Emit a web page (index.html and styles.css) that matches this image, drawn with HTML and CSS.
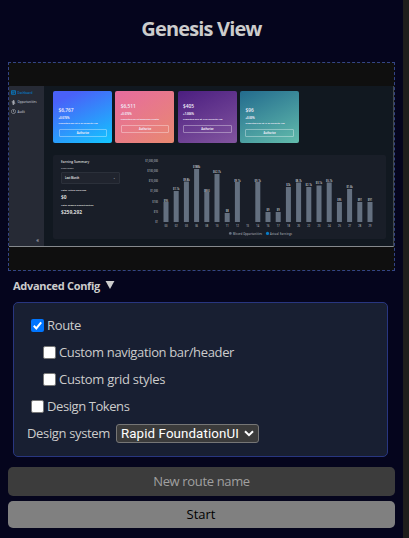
FILE: index.html
```
<!DOCTYPE html>
<html lang="en">
<head>
<meta charset="utf-8">
<title>Genesis View</title>
<link rel="stylesheet" href="styles.css">
</head>
<body>
<main class="view">
  <h1><span class="title">Genesis View</span></h1>
  <section class="drop">
    <div class="dash">
      <nav class="side">
        <div class="nav on"><svg viewBox="0 0 5 5"><path d="M.5.7h4v3.6h-4zM.5 2h4M2 2v2.3" fill="none" stroke="currentColor" stroke-width=".8"/></svg>Dashboard</div>
        <div class="nav"><svg viewBox="0 0 5 5"><path d="M4 1.2H2Q1 1.2 1 1.9T2 2.5H3Q4 2.5 4 3.1T3 3.9H1M2.5 0v5" fill="none" stroke="currentColor" stroke-width=".7"/></svg>Opportunities</div>
        <div class="nav"><svg viewBox="0 0 5 5"><path d="M2.5.4a2.1 2.1 0 1 0 .01 0M2.5 1v1.7l1 .7" fill="none" stroke="currentColor" stroke-width=".6"/></svg>Audit</div>
        <span class="fold">«</span>
      </nav>
      <div class="main">
        <div class="cards">
          <div class="card blue"><b>$6,767</b><i>+0.076%</i><p>Projected Rev at % of Security HM</p><span class="btn">Authorize</span></div>
          <div class="card pink up"><b>$6,511</b><i>+0.076%</i><p>Projected Rev at Business Crypto</p><span class="btn">Authorize</span></div>
          <div class="card violet up"><b>$405</b><i>+1.006%</i><p>Projected Rev at % of Security HM</p><span class="btn">Authorize</span></div>
          <div class="card teal"><b>$96</b><i>+0.00%</i><p>Projected Rev at % of Security HM</p><span class="btn">Authorize</span></div>
        </div>
        <div class="panel">
          <div class="summary">
            <strong class="head">Earning Summary</strong>
            <span class="lab">Time range</span>
            <div class="pick"><span>Last Month</span><span>⌄</span></div>
            <span class="cap">Total Actual Earnings</span>
            <b class="num">$0</b>
            <span class="cap second">Total Missed Opportunities</span>
            <b class="num">$259,292</b>
          </div>
          <svg class="chart" viewBox="140 155 247 84">
            <g class="axis" text-anchor="end">
              <text x="159" y="162">$1,000,000</text><text x="159" y="172">$100,000</text><text x="159" y="182.3">$10,000</text><text x="159" y="192.4">$1,000</text><text x="159" y="202.5">$100</text><text x="159" y="212.6">$10</text><text x="159" y="222.7">$1</text>
            </g>
            <path class="bars" d="M167 222V202M177.2 222V191M187.4 222V181.5M197.6 222V169M207.8 222V192M218 222V174M228.2 222V213M238.4 222V182M258.8 222V182M269 222V212M279.2 222V212M289.4 222V187M299.6 222V182.5M309.8 222V187M320 222V185.5M330.2 222V182.5M340.4 222V202M350.6 222V189M360.8 222V202M371 222V202"/>
            <g class="vals" text-anchor="middle">
              <text x="167" y="201.7">$95</text><text x="177.2" y="190.4">$1.1k</text><text x="187.4" y="180.5">$9.8k</text><text x="197.6" y="168.2">$188k</text><text x="207.8" y="191.6">$850</text><text x="218" y="173.2">$62.7k</text><text x="228.2" y="212">$8</text><text x="238.4" y="181.6">$9.1k</text><text x="258.8" y="181.6">$9.1k</text><text x="269" y="211">$9</text><text x="279.2" y="211">$9</text><text x="289.4" y="186.2">$2k</text><text x="299.6" y="182.3">$8.7k</text><text x="309.8" y="185.5">$2.1k</text><text x="320" y="184.2">$3.1k</text><text x="330.2" y="181.6">$5.7k</text><text x="340.4" y="201">$95</text><text x="350.6" y="188">$1.6k</text><text x="360.8" y="201.3">$91</text><text x="371" y="201.3">$91</text>
            </g>
            <g class="axis" text-anchor="middle">
              <text x="167" y="227.3">00</text><text x="177.2" y="227.3">02</text><text x="187.4" y="227.3">03</text><text x="197.6" y="227.3">06</text><text x="207.8" y="227.3">08</text><text x="218" y="227.3">10</text><text x="228.2" y="227.3">11</text><text x="238.4" y="227.3">12</text><text x="248.6" y="227.3">13</text><text x="258.8" y="227.3">14</text><text x="269" y="227.3">16</text><text x="279.2" y="227.3">17</text><text x="289.4" y="227.3">18</text><text x="299.6" y="227.3">20</text><text x="309.8" y="227.3">22</text><text x="320" y="227.3">23</text><text x="330.2" y="227.3">24</text><text x="340.4" y="227.3">25</text><text x="350.6" y="227.3">27</text><text x="360.8" y="227.3">28</text><text x="371" y="227.3">29</text>
            </g>
            <circle cx="231.3" cy="233.4" r="1.4" fill="#667080"/><circle cx="268.5" cy="233.4" r="1.6" fill="#087dc8"/>
            <g class="legend"><text x="234" y="234.6" textLength="29">Missed Opportunities</text><text x="271" y="234.6" textLength="22">Actual Earnings</text></g>
          </svg>
        </div>
      </div>
    </div>
  </section>
  <div class="adv"><span>Advanced Config</span><svg viewBox="0 0 10 9"><path d="M0 0h10L5 9z" fill="#ccc"/></svg></div>
  <section class="config">
    <label class="row"><span class="box checked"><svg viewBox="0 0 13 13"><path d="M2.8 6.8l2.5 2.6 4.9-6" fill="none" stroke="#fff" stroke-width="2"/></svg></span><span class="text">Route</span></label>
    <label class="row sub"><span class="box"></span><span class="text">Custom navigation bar/header</span></label>
    <label class="row sub"><span class="box"></span><span class="text grid-label">Custom grid styles</span></label>
    <label class="row"><span class="box"></span><span class="text tokens-label">Design Tokens</span></label>
    <div class="system"><span class="text">Design system</span><div class="select"><span>Rapid FoundationUI</span><svg viewBox="0 0 10 7"><path d="M1 1.2l4 4 4-4" fill="none" stroke="#fff" stroke-width="2"/></svg></div></div>
  </section>
  <div class="field"><span class="text">New route name</span></div>
  <div class="start"><span>Start</span></div>
</main>
</body>
</html>
```
FILE: styles.css
```
* { box-sizing: border-box; }
body { margin: 0; height: 538px; overflow: hidden; background: #1f1e1c; font-family: "Open Sans", sans-serif; color: #ccc; }
.view { width: 403px; height: 538px; padding: 0 8px; background: #05051d; display: flex; flex-direction: column; }
h1 { margin: 0; height: 62px; padding-top: 15px; text-align: center; font-size: 20px; line-height: 28px; font-weight: 700; letter-spacing: -.85px; flex: none; }
.drop { height: 209px; width: 387px; padding: 23px 0 0; border: 1px dashed #344586; background: #0f0f0f; flex: none; }
.dash { height: 161px; display: flex; background: #111820; border-bottom: 1px solid #85898d; border-right: 1px solid #41484e; font-size: 3px; line-height: 4px; }
.side { width: 35px; background: #262a35; padding: 4px 0 0 2px; display: flex; flex-direction: column; gap: 4.7px; color: #b7bac1; font-size: 2.8px; font-weight: 600; }
.nav { display: flex; align-items: center; gap: 1.6px; height: 5px; }
.nav svg { width: 5px; height: 5px; }
.nav.on { color: #087dc8; }
.fold { margin: auto 5px 4px auto; font-size: 5px; }
.main { padding: 5px 0 0 9px; }
.cards { display: flex; gap: 3.3px; height: 52px; }
.card { width: 59px; border-radius: 2px; padding: 16px 5px 0 5.5px; color: #f2edfa; display: flex; flex-direction: column; }
.card.up { padding-top: 12px; }
.card b { font-size: 4.8px; line-height: 6px; font-weight: 600; }
.card i { font-style: normal; font-weight: 700; font-size: 2.7px; margin-top: 3px; line-height: 4px; }
.card p { margin: 1px 0 0; font-weight: 700; font-size: 2.35px; line-height: 4px; white-space: nowrap; }
.btn { margin-top: 4px; height: 8px; border: 1px solid rgba(255,255,255,.35); border-radius: 1px; text-align: center; font-size: 2.5px; font-weight: 700; line-height: 6px; }
.blue { background: linear-gradient(155deg, #4961f8 15%, #12c7ff); }
.pink { background: linear-gradient(145deg, #e76b9f, #e88970); }
.violet { background: linear-gradient(155deg, #4b1e80, #82559f); }
.teal { background: linear-gradient(155deg, #236b8e, #62bcac); }
.panel { margin-top: 12px; width: 333px; height: 84px; background: #191e28; border-radius: 2px; display: flex; }
.summary { width: 87px; padding: 4px 0 0 8px; display: flex; flex-direction: column; color: #ddd; }
.head { font-size: 3.3px; line-height: 5px; font-weight: 600; }
.lab { font-size: 2.4px; margin-top: 2px; line-height: 5px; }
.pick { width: 59px; height: 12px; margin-top: 1px; background: #20242e; border: 1px solid #2b303a; border-radius: 1px; padding: 0 3px; display: flex; justify-content: space-between; font-size: 2.5px; font-weight: 700; line-height: 10px; }
.cap { margin-top: 4px; font-size: 2.4px; font-weight: 700; line-height: 4px; }
.num { margin-top: 2px; font-size: 4.9px; line-height: 6px; }
.cap.second { margin-top: 3px; }
.chart { width: 247px; height: 84px; flex: none; }
.axis, .vals, .legend { font-size: 2.5px; fill: #a4a9b1; font-weight: 600; }
.vals { fill: #d0d3d8; }
.bars { stroke: #647080; stroke-width: 5px; }
.adv { height: 31px; padding: 0 5px 3px; display: flex; align-items: center; gap: 5px; font-size: 11px; font-weight: 700; flex: none; letter-spacing: -.3px; }
.adv svg { width: 10px; height: 8px; }
.config { width: 375px; height: 155px; margin-left: 5px; border: 1px solid #283680; border-radius: 5px; background: #181f32; padding: 9px 13px 0 17px; font-size: 13px; flex: none; }
.row { height: 27px; display: flex; align-items: center; gap: 3px; }
.row.sub { padding-left: 12px; }
.box { width: 13px; height: 13px; flex: none; background: #fff; border: 1px solid #777; border-radius: 2px; }
.box.checked { background: #0075ff; border: 0; }
.box svg { display: block; width: 13px; height: 13px; }
.text { white-space: nowrap; letter-spacing: -.35px; padding-bottom: 1px; }
.grid-label { letter-spacing: -.29px; }
.tokens-label { letter-spacing: -.42px; }
.system { display: flex; align-items: center; height: 27px; margin-left: -4px; gap: 6px; }
.select { width: 143px; height: 19px; border: 1px solid #767676; border-radius: 3px; background: #3b3b3b; color: #fff; display: flex; align-items: center; justify-content: space-between; padding: 0 4px; font: 13.33px "Roboto", sans-serif; letter-spacing: .1px; white-space: nowrap; }
.select svg { width: 10px; height: 7px; }
.field, .start { width: 387px; border-radius: 5px; flex: none; display: flex; align-items: center; justify-content: center; font-size: 13px; }
.field { height: 29px; margin-top: 10px; background: #3c3c3c; color: #a0a0a0; }
.start { height: 27px; margin-top: 5px; padding: 0 1px 1px 0; background: #808080; color: #000; }
```
